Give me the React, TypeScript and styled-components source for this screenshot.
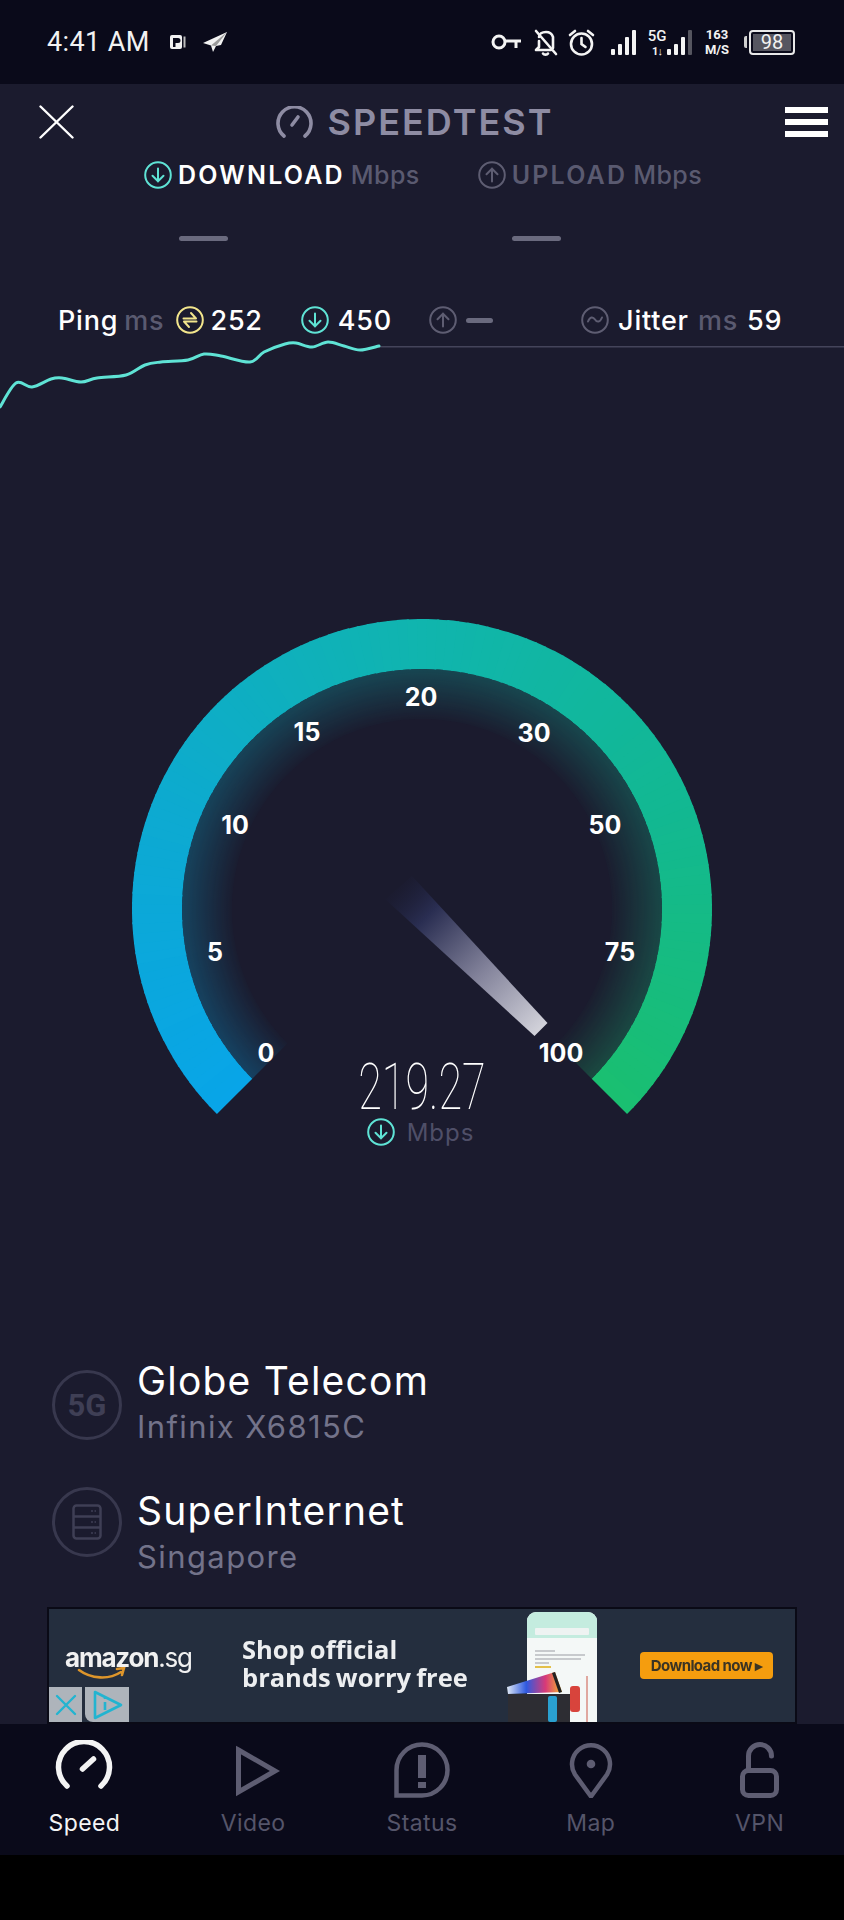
import React, { FunctionComponent } from 'react'
import styled, { createGlobalStyle } from 'styled-components'

const bg = '#1b1b2e'
const barBg = '#0a0a1a'
const mint = '#5fe3d5'
const greyIcon = '#5e5d72'
const mutedText = '#5a5a70'
const uiFont = `Inter, "Liberation Sans", sans-serif`

const GlobalStyle = createGlobalStyle`
    html, body {
        margin : 0;
        padding : 0;
        background : #000;
    }
    * {
        box-sizing : border-box;
    }
`

const Page = styled.div`
    width : 844px;
    height : 1920px;
    display : flex;
    flex-direction : column;
    background : #000;
    font-family : ${uiFont};
    overflow : hidden;
`

/* status bar */

const StatusBar = styled.div`
    height : 84px;
    flex : none;
    background : ${barBg};
    display : flex;
    align-items : center;
    justify-content : space-between;
    padding : 0 49px 0 47px;
`

const StatusLeft = styled.div`
    display : flex;
    align-items : center;
`

const Clock = styled.span`
    font-family : Roboto, sans-serif;
    font-size : 27px;
    letter-spacing : .4px;
    color : #f2f2f2;
    margin-right : 20px;
`

const StatusRight = styled.div`
    display : flex;
    align-items : center;
`

const Glyph = styled.svg<{ $after? : number }>`
    display : block;
    flex : none;
    margin-right : ${p => p.$after ?? 0}px;
`

const NetStack = styled.div`
    display : flex;
    flex-direction : column;
    align-items : center;
    width : 18px;
    font-family : Roboto, sans-serif;
    font-weight : 500;
    color : #f2f2f2;
    font-size : 15px;
    line-height : 18px;
`

const NetArrows = styled.span`
    font-size : 11px;
    font-weight : 700;
    line-height : 13px;
    letter-spacing : -1px;
`

const SpeedStack = styled.div`
    display : flex;
    flex-direction : column;
    align-items : center;
    width : 26px;
    margin : 0 14px 0 12px;
    font-family : Roboto, sans-serif;
    font-weight : 700;
    color : #f2f2f2;
    font-size : 13px;
    line-height : 15px;
`

const BatteryWrap = styled.div`
    display : flex;
    align-items : center;
    gap : 2px;
    width : 51px;
`

const BatteryNub = styled.div`
    width : 3px;
    height : 12px;
    background : #cfcfcf;
    border-radius : 2px 0 0 2px;
`

const BatteryBody = styled.div`
    flex : 1;
    height : 25px;
    border : 2px solid #e8e8e8;
    border-radius : 4px;
    padding : 2px;
    display : flex;
`

const BatteryFill = styled.div`
    flex : 1;
    background : #565660;
    color : #f2f2f2;
    font-family : Roboto, sans-serif;
    font-size : 20px;
    line-height : 17px;
    text-align : center;
`

/* main panel */

const Main = styled.div`
    height : 1640px;
    flex : none;
    background : ${bg};
    display : flex;
    flex-direction : column;
`

const Header = styled.div`
    height : 74px;
    flex : none;
    display : flex;
    align-items : center;
    justify-content : space-between;
    padding : 2px 16px 0 39px;
`

const Title = styled.div`
    display : flex;
    align-items : center;
    gap : 15px;
    margin-left : -30px;
    color : #8e8ca3;
    font-size : 36px;
    font-weight : 600;
    letter-spacing : 2px;
`

const Burger = styled.div`
    width : 43px;
    display : flex;
    flex-direction : column;
    gap : 6px;
`

const BurgerBar = styled.div`
    height : 6px;
    background : #fff;
`

const TestTabs = styled.div`
    display : flex;
    gap : 58px;
    padding-left : 144px;
    height : 28px;
    margin-top : 3px;
    flex : none;
`

const TestTab = styled.div`
    display : flex;
    align-items : center;
    gap : 6px;
    font-size : 25px;
    font-weight : 600;
`

const TabName = styled.span<{ $active? : boolean }>`
    color : ${p => p.$active ? '#fff' : mutedText};
    letter-spacing : 2.200px;
`

const TabUnit = styled.span`
    color : ${mutedText};
    font-weight : 500;
    letter-spacing : .4px;
`

const Dashes = styled.div`
    display : flex;
    gap : 284px;
    padding-left : 179px;
    margin-top : 47px;
    flex : none;
`

const Dash = styled.div<{ $w? : number }>`
    width : ${p => p.$w ?? 49}px;
    height : 5px;
    border-radius : 3px;
    background : #6a6a7e;
`

const Stats = styled.div`
    display : flex;
    align-items : center;
    height : 30px;
    margin-top : 64px;
    padding-left : 58px;
    flex : none;
    font-size : 27px;
    font-weight : 500;
    letter-spacing : .8px;
    color : #fff;
`

const StatGroup = styled.div<{ $before? : number }>`
    display : flex;
    align-items : center;
    gap : 9px;
    margin-left : ${p => p.$before ?? 0}px;
`

const StatUnit = styled.span<{ $pull? : number }>`
    color : ${mutedText};
    margin-left : ${p => -(p.$pull ?? 0)}px;
    margin-right : ${p => p.$pull ?? 0}px;
`

const StatValue = styled.span<{ $pull? : number }>`
    margin-left : ${p => -(p.$pull ?? 0)}px;
`

const Graph = styled.svg`
    display : block;
    flex : none;
`

/* gauge */

const GaugeWrap = styled.div`
    position : relative;
    width : 844px;
    height : 532px;
    margin-top : 208px;
    flex : none;
`

const GaugeSvg = styled.svg`
    display : block;
`

const Tick = styled.span<{ $x : number, $y : number }>`
    position : absolute;
    left : ${p => p.$x}px;
    top : ${p => p.$y}px;
    transform : translate(-50%, -50%);
    font-size : 25px;
    font-weight : 700;
    color : #fff;
`

const Reading = styled.div`
    position : absolute;
    left : 0;
    right : 0;
    top : 439px;
    display : flex;
    flex-direction : column;
    align-items : center;
`

const ReadingValue = styled.div`
    font-family : Roboto, sans-serif;
    font-weight : 100;
    font-size : 65px;
    line-height : 60px;
    color : #fff;
    transform : scaleX(.665);
`

const ReadingUnit = styled.div`
    display : flex;
    align-items : center;
    gap : 12px;
    height : 28px;
    margin-top : 1px;
    margin-left : -3px;
    font-size : 24px;
    letter-spacing : 1px;
    color : #4f4f68;
`

/* provider info */

const Info = styled.div`
    display : flex;
    flex-direction : column;
    gap : 38px;
    margin-top : 207px;
    padding-left : 52px;
    flex : none;
`

const InfoRow = styled.div`
    display : flex;
    align-items : flex-start;
    gap : 15px;
`

const InfoBadge = styled.div<{ $top : number }>`
    width : 70px;
    height : 70px;
    flex : none;
    margin-top : ${p => p.$top}px;
    border-radius : 50%;
    border : 3px solid #38384e;
    display : flex;
    align-items : center;
    justify-content : center;
    color : #3f3f55;
    font-family : Roboto, sans-serif;
    font-size : 31px;
    font-weight : 700;
`

const InfoText = styled.div`
    display : flex;
    flex-direction : column;
`

const InfoName = styled.span`
    font-size : 39px;
    line-height : 48px;
    letter-spacing : 1.200px;
    color : #fff;
`

const InfoSub = styled.span`
    font-size : 31px;
    line-height : 44px;
    letter-spacing : 1.400px;
    color : #73738a;
`

/* ad banner */

const Ad = styled.div`
    position : relative;
    margin : auto 47px 0 47px;
    height : 117px;
    flex : none;
    display : flex;
    align-items : center;
    background : #242e3e;
    border : 2px solid #0a0a16;
    overflow : hidden;
`

const AdLogo = styled.div`
    position : relative;
    width : 193px;
    padding-left : 16px;
    margin-top : -16px;
    color : #f1f1f1;
    font-size : 26px;
    line-height : 26px;
    letter-spacing : -1.200px;
    filter : blur(.5px);
`

const AdLogoBold = styled.span`
    font-weight : 700;
`

const Smile = styled.svg`
    position : absolute;
    left : 28px;
    top : 22px;
`

const AdHeadline = styled.div`
    width : 263px;
    font-family : "Open Sans", sans-serif;
    font-size : 25.500px;
    font-weight : 700;
    line-height : 28px;
    word-spacing : -1.500px;
    margin-top : -6px;
    color : #eceef0;
    filter : blur(.5px);
`

const AdPhone = styled.svg`
    flex : none;
    align-self : flex-end;
    filter : blur(.6px);
`

const AdButton = styled.div`
    margin-left : 25px;
    width : 133px;
    height : 27px;
    border-radius : 4px;
    background : #f59d0e;
    color : #3b3424;
    font-size : 15px;
    font-weight : 700;
    line-height : 27px;
    text-align : center;
    letter-spacing : -.6px;
    filter : blur(.5px);
`

const AdChoices = styled.div`
    position : absolute;
    left : 0;
    bottom : 0;
    display : flex;
    gap : 3px;
`

const AdChip = styled.div<{ $w : number, $notch? : boolean }>`
    width : ${p => p.$w}px;
    height : 35px;
    background : #aeb4bb;
    display : flex;
    align-items : center;
    justify-content : center;
    border-bottom-left-radius : ${p => p.$notch ? 8 : 0}px;
`

/* bottom nav */

const Nav = styled.div`
    height : 131px;
    flex : none;
    background : ${barBg};
    display : grid;
    grid-template-columns : repeat(5, 1fr);
    padding-top : 16px;
`

const NavItem = styled.div<{ $active? : boolean }>`
    display : flex;
    flex-direction : column;
    align-items : center;
    color : ${p => p.$active ? '#f4f4f4' : '#55556a'};
    font-size : 23px;
    letter-spacing : .4px;
`

const NavLabel = styled.span`
    margin-top : 10px;
    line-height : 30px;
`

const Footer = styled.div`
    flex : 1;
    background : #000;
`

/* small drawings */

const CircleIcon : FunctionComponent<{ color : string, size? : number, width? : number, children : React.ReactNode }> = ({ color, size = 28, width = 2, children }) => (
    <Glyph width={size} height={size} viewBox="0 0 28 28" fill="none" stroke={color} strokeWidth={width} strokeLinecap="round" strokeLinejoin="round">
        <circle cx="14" cy="14" r="12.8" />
        {children}
    </Glyph>
)

const ArrowDown : FunctionComponent<{ color : string }> = ({ color }) => (
    <CircleIcon color={color}>
        <path d="M14 7.5v13M8.5 14.8 14 20.3l5.5-5.5" />
    </CircleIcon>
)

const ArrowUp : FunctionComponent<{ color : string }> = ({ color }) => (
    <CircleIcon color={color}>
        <path d="M14 20.5v-13M8.5 13.2 14 7.7l5.5 5.5" />
    </CircleIcon>
)

const curve = [
    [0, 407], [16, 383], [32, 387], [51, 379], [62, 378], [81, 382], [97, 378], [126, 375],
    [145, 365], [161, 362], [188, 360], [204, 354], [221, 356], [250, 362], [264, 352], [285, 344],
    [296, 343], [312, 347], [328, 342], [344, 346], [360, 350], [379, 346],
]

// catmull-rom through the sampled points
const curvePath = curve.map((p, i) => {
    if (i === 0) return `M${p[0]} ${p[1]}`
    const p0 = curve[Math.max(0, i - 2)]
    const p1 = curve[i - 1]
    const p3 = curve[Math.min(curve.length - 1, i + 1)]
    const c1x = p1[0] + (p[0] - p0[0]) / 6
    const c1y = p1[1] + (p[1] - p0[1]) / 6
    const c2x = p[0] - (p3[0] - p1[0]) / 6
    const c2y = p[1] - (p3[1] - p1[1]) / 6
    return `C${c1x} ${c1y} ${c2x} ${c2y} ${p[0]} ${p[1]}`
}).join('')

const cx = 422
const cy = 291
const stops : [number, number[]][] = [
    [0, [8, 165, 232]],
    [.25, [13, 170, 208]],
    [.5, [16, 181, 174]],
    [.75, [18, 184, 146]],
    [1, [26, 191, 112]],
]

const mix = (t : number) => {
    for (let i = 1; i < stops.length; i++) {
        if (t <= stops[i][0]) {
            const [a, ca] = stops[i - 1]
            const [b, cb] = stops[i]
            const k = (t - a) / (b - a)
            return `rgb(${ca.map((v, n) => Math.round(v + (cb[n] - v) * k)).join(',')})`
        }
    }
    return 'rgb(26,191,112)'
}

const point = (r : number, deg : number) => {
    const a = deg * Math.PI / 180
    return `${(cx + r * Math.sin(a)).toFixed(2)} ${(cy - r * Math.cos(a)).toFixed(2)}`
}

const segments = Array.from({ length: 135 }, (_, i) => ({
    from: -135 + i * 2,
    to: Math.min(135, -135 + (i + 1) * 2 + .4),
    color: mix((i + .5) / 135),
}))

const Sweep : FunctionComponent<{ r : number, width : number }> = ({ r, width }) => (
    <>
        {segments.map(s => (
            <path key={s.from} d={`M${point(r, s.from)}A${r} ${r} 0 0 1 ${point(r, s.to)}`} stroke={s.color} strokeWidth={width} fill="none" />
        ))}
    </>
)

const ticks = [
    { label: '0', x: 266, y: 435 },
    { label: '5', x: 215, y: 334 },
    { label: '10', x: 235, y: 207 },
    { label: '15', x: 307, y: 114 },
    { label: '20', x: 421, y: 79 },
    { label: '30', x: 534, y: 115 },
    { label: '50', x: 605, y: 207 },
    { label: '75', x: 620, y: 334 },
    { label: '100', x: 561, y: 435 },
]

const Gauge = () => (
    <GaugeWrap>
        <GaugeSvg width="844" height="532" viewBox="0 0 844 532">
            <defs>
                <radialGradient id="glowFade" gradientUnits="userSpaceOnUse" cx={cx} cy={cy} r="240">
                    <stop offset=".78" stopColor="#000" />
                    <stop offset="1" stopColor="#484848" />
                </radialGradient>
                <mask id="glowMask" maskUnits="userSpaceOnUse" x="0" y="0" width="844" height="532">
                    <circle cx={cx} cy={cy} r="240" fill="url(#glowFade)" />
                </mask>
                <linearGradient id="needleFill" gradientUnits="userSpaceOnUse" x1="396" y1="266" x2="541" y2="411">
                    <stop offset="0" stopColor="#1e2140" stopOpacity="0" />
                    <stop offset=".22" stopColor="#2a2e52" />
                    <stop offset=".6" stopColor="#82829a" />
                    <stop offset="1" stopColor="#d2d2da" />
                </linearGradient>
            </defs>
            <g mask="url(#glowMask)">
                <Sweep r={215} width={50} />
            </g>
            <Sweep r={265} width={50} />
            <polygon points="412,258 547.5,405 534.5,418 385,281" fill="url(#needleFill)" />
        </GaugeSvg>
        {ticks.map(t => <Tick key={t.label} $x={t.x} $y={t.y}>{t.label}</Tick>)}
        <Reading>
            <ReadingValue>219.27</ReadingValue>
            <ReadingUnit>
                <ArrowDown color={mint} />
                Mbps
            </ReadingUnit>
        </Reading>
    </GaugeWrap>
)

const App = () => (
    <Page>
        <GlobalStyle />
        <StatusBar>
            <StatusLeft>
                <Clock>4:41 AM</Clock>
                <Glyph $after={16} width="17" height="16" viewBox="0 0 17 16">
                    <rect x="0" y="1" width="12" height="14" rx="2" fill="#f2f2f2" />
                    <path d="M13.5 2.5h2v11h-2z" fill="#bbb" />
                    <path d="M3 4h5a2 2 0 0 1 0 5H5.5v4H3z" fill={barBg} />
                </Glyph>
                <Glyph width="24" height="20" viewBox="0 0 24 20">
                    <path d="M24 0 0 11l8 2.5L10 20l3-6 5-1z" fill="#f2f2f2" />
                    <path d="M24 0 8 13.5l5 .5z" fill="#9a9a9a" />
                </Glyph>
            </StatusLeft>
            <StatusRight>
                <Glyph $after={12} width="31" height="18" viewBox="0 0 31 18" fill="none" stroke="#f4f4f4" strokeWidth="3">
                    <circle cx="8" cy="9" r="6" />
                    <path d="M14 8h16M25 8v7" />
                </Glyph>
                <Glyph $after={10} width="24" height="27" viewBox="0 0 24 27" fill="none" stroke="#f4f4f4" strokeWidth="2.6" strokeLinecap="round" strokeLinejoin="round">
                    <path d="M5 8c0-3 3-5 7-5s6 2 7 5v11M5 12v6l-3 3h15" />
                    <path d="M2 2 22 25" />
                    <path d="M9 24.5c1 1.500 4 1.500 5 0" />
                </Glyph>
                <Glyph $after={16} width="27" height="27" viewBox="0 0 27 27" fill="none" stroke="#f4f4f4" strokeWidth="2.6" strokeLinecap="round">
                    <circle cx="13.500" cy="15" r="10.500" />
                    <path d="M13.500 9v6l4 3M2 6l5-4M25 6l-5-4" />
                </Glyph>
                <Glyph $after={12} width="25" height="25" viewBox="0 0 25 25" fill="#f4f4f4">
                    <rect x="0" y="19" width="4" height="6" rx="1" />
                    <rect x="7" y="14" width="4" height="11" rx="1" />
                    <rect x="14" y="7" width="4" height="18" rx="1" />
                    <rect x="21" y="0" width="4" height="25" rx="1" />
                </Glyph>
                <NetStack>
                    5G
                    <NetArrows>1↓</NetArrows>
                </NetStack>
                <Glyph width="26" height="25" viewBox="0 0 26 25" fill="#f4f4f4">
                    <rect x="1" y="19" width="4" height="6" rx="1" />
                    <rect x="8" y="14" width="4" height="11" rx="1" />
                    <rect x="15" y="7" width="4" height="18" rx="1" />
                    <rect x="22" y="0" width="4" height="25" rx="1" fill="#55555f" />
                </Glyph>
                <SpeedStack>
                    <span>163</span>
                    <span>M/S</span>
                </SpeedStack>
                <BatteryWrap>
                    <BatteryNub />
                    <BatteryBody>
                        <BatteryFill>98</BatteryFill>
                    </BatteryBody>
                </BatteryWrap>
            </StatusRight>
        </StatusBar>

        <Main>
            <Header>
                <Glyph width="35" height="34" viewBox="0 0 35 34" stroke="#fff" strokeWidth="2.4" strokeLinecap="round">
                    <path d="M1.500 1.500 33.500 32.500M33.500 1.500 1.500 32.500" />
                </Glyph>
                <Title>
                    <Glyph width="37" height="32" viewBox="0 0 37 32" fill="none" stroke="#8e8ca3" strokeWidth="3.6" strokeLinecap="round">
                        <path d="M8 30A16.500 16.500 0 1 1 29 30" />
                        <path d="M16 19 22 11" />
                    </Glyph>
                    SPEEDTEST
                </Title>
                <Burger>
                    <BurgerBar />
                    <BurgerBar />
                    <BurgerBar />
                </Burger>
            </Header>

            <TestTabs>
                <TestTab>
                    <ArrowDown color={mint} />
                    <TabName $active>DOWNLOAD</TabName>
                    <TabUnit>Mbps</TabUnit>
                </TestTab>
                <TestTab>
                    <ArrowUp color={greyIcon} />
                    <TabName>UPLOAD</TabName>
                    <TabUnit>Mbps</TabUnit>
                </TestTab>
            </TestTabs>

            <Dashes>
                <Dash />
                <Dash />
            </Dashes>

            <Stats>
                <StatGroup>
                    Ping
                    <StatUnit $pull={3}>ms</StatUnit>
                    <CircleIcon color="#f2e58c">
                        <path d="M7.500 12.500h12.500l-5-5.500M20.500 15.500H8l5 5.500" />
                    </CircleIcon>
                    <StatValue $pull={3}>252</StatValue>
                </StatGroup>
                <StatGroup $before={38}>
                    <ArrowDown color={mint} />
                    450
                </StatGroup>
                <StatGroup $before={37}>
                    <ArrowUp color={greyIcon} />
                    <Dash $w={27} />
                </StatGroup>
                <StatGroup $before={88}>
                    <CircleIcon color={greyIcon}>
                        <path d="M7 15.500c2-5 5-5 7-2s5 3 7-2" />
                    </CircleIcon>
                    Jitter
                    <StatUnit>ms</StatUnit>
                    59
                </StatGroup>
            </Stats>

            <Graph width="844" height="75" viewBox="0 335 844 75" fill="none">
                <path d="M379 346.700H844" stroke="#44445a" strokeWidth="1.500" />
                <path d={curvePath} stroke={mint} strokeWidth="3" strokeLinecap="round" />
            </Graph>

            <Gauge />

            <Info>
                <InfoRow>
                    <InfoBadge $top={13}>5G</InfoBadge>
                    <InfoText>
                        <InfoName>Globe Telecom</InfoName>
                        <InfoSub>Infinix X6815C</InfoSub>
                    </InfoText>
                </InfoRow>
                <InfoRow>
                    <InfoBadge $top={0}>
                        <Glyph width="30" height="36" viewBox="0 0 30 36" fill="none" stroke="#3f3f55" strokeWidth="2.500">
                            <rect x="1.500" y="1.500" width="27" height="33" rx="3" />
                            <path d="M1.500 12.500h27M1.500 23.500h27" />
                            <path d="M19 7h5M19 18h5M19 29h5" strokeWidth="1.500" strokeDasharray="2 1.500" />
                        </Glyph>
                    </InfoBadge>
                    <InfoText>
                        <InfoName>SuperInternet</InfoName>
                        <InfoSub>Singapore</InfoSub>
                    </InfoText>
                </InfoRow>
            </Info>

            <Ad>
                <AdLogo>
                    <AdLogoBold>amazon</AdLogoBold>.sg
                    <Smile width="50" height="14" viewBox="0 0 50 14" fill="none" stroke="#dd952b" strokeWidth="2.600" strokeLinecap="round">
                        <path d="M2 3C14 12 32 13 44 5M40 2l7-1-2 7" />
                    </Smile>
                </AdLogo>
                <AdHeadline>Shop official<br />brands worry free</AdHeadline>
                <AdPhone width="110" height="111" viewBox="0 2 110 111">
                    <defs>
                        <linearGradient id="switchScreen" x1="0" y1="0" x2="1" y2="0">
                            <stop offset="0" stopColor="#dfe9f5" />
                            <stop offset=".35" stopColor="#2f5ae0" />
                            <stop offset=".7" stopColor="#d83a78" />
                            <stop offset="1" stopColor="#f5b82c" />
                        </linearGradient>
                    </defs>
                    <rect x="22" y="3" width="70" height="130" rx="9" fill="#f4f8f7" />
                    <path d="M22 12a9 9 0 0 1 9-9h52a9 9 0 0 1 9 9v17H22z" fill="#c4ecdf" />
                    <rect x="30" y="19" width="54" height="7" rx="1" fill="#eef3f2" />
                    <path d="M30 42h20M30 46h50M30 50h46M30 54h14" stroke="#b8bac0" strokeWidth="1.400" />
                    <path d="M30 58h16" stroke="#e3c04a" strokeWidth="2" />
                    <path d="M82 67v46" stroke="#e0a8a0" strokeWidth="2" />
                    <path d="M2 78 50 63l7 20-54 2z" fill="url(#switchScreen)" />
                    <path d="M50 63l7 20-3 1-7-20z" fill="#222" />
                    <rect x="3" y="85" width="62" height="28" fill="#2d2d33" />
                    <rect x="43" y="87" width="9" height="26" rx="2" fill="#2aa0d0" />
                    <rect x="65" y="77" width="10" height="26" rx="3" fill="#d8443c" />
                </AdPhone>
                <AdButton>Download now ▸</AdButton>
                <AdChoices>
                    <AdChip $w={33}>
                        <Glyph width="22" height="22" viewBox="0 0 22 22" stroke="#22b4d0" strokeWidth="2.400" strokeLinecap="round">
                            <path d="M2 2 20 20M20 2 2 20" />
                        </Glyph>
                    </AdChip>
                    <AdChip $w={44} $notch>
                        <Glyph width="32" height="32" viewBox="0 0 32 32" fill="none" stroke="#22b4d0" strokeWidth="2.600" strokeLinejoin="round">
                            <path d="M4 3 30 16 4 29z" />
                            <path d="M14 13v8M14 9v1" />
                        </Glyph>
                    </AdChip>
                </AdChoices>
            </Ad>
        </Main>

        <Nav>
            <NavItem $active>
                <Glyph width="60" height="58" viewBox="0 0 60 58" fill="none" stroke="#f4f4f4" strokeWidth="5.500" strokeLinecap="round">
                    <path d="M13 46A25.500 25.500 0 1 1 47 46" />
                    <path d="M28.500 29 39.500 19" />
                </Glyph>
                <NavLabel>Speed</NavLabel>
            </NavItem>
            <NavItem>
                <Glyph width="60" height="58" viewBox="0 0 60 58" fill="none" stroke={greyIcon} strokeWidth="5" strokeLinejoin="miter">
                    <path d="M15.500 10 52 31 15.500 52z" />
                </Glyph>
                <NavLabel>Video</NavLabel>
            </NavItem>
            <NavItem>
                <Glyph width="60" height="58" viewBox="0 0 60 58" fill="none" stroke={greyIcon} strokeWidth="4.500">
                    <path d="M4.500 55.500H30A25.500 25.500 0 1 0 4.500 30z" />
                    <path d="M30 15v23" strokeWidth="8" />
                    <path d="M30 42v6" strokeWidth="8" />
                </Glyph>
                <NavLabel>Status</NavLabel>
            </NavItem>
            <NavItem>
                <Glyph width="60" height="58" viewBox="0 0 60 58" fill="none" stroke={greyIcon} strokeWidth="4.500" strokeLinejoin="round">
                    <path d="M30 56.500 14 34.500a19 19 0 1 1 32 0z" />
                    <circle cx="30" cy="24" r="4.300" fill={greyIcon} stroke="none" />
                </Glyph>
                <NavLabel>Map</NavLabel>
            </NavItem>
            <NavItem>
                <Glyph width="60" height="58" viewBox="0 0 60 58" fill="none" stroke={greyIcon} strokeWidth="5" strokeLinecap="round">
                    <rect x="12.500" y="30.500" width="34" height="25" rx="6" />
                    <path d="M18.500 29V16a11.500 11.500 0 0 1 23 0" />
                </Glyph>
                <NavLabel>VPN</NavLabel>
            </NavItem>
        </Nav>
        <Footer />
    </Page>
)

export default App
